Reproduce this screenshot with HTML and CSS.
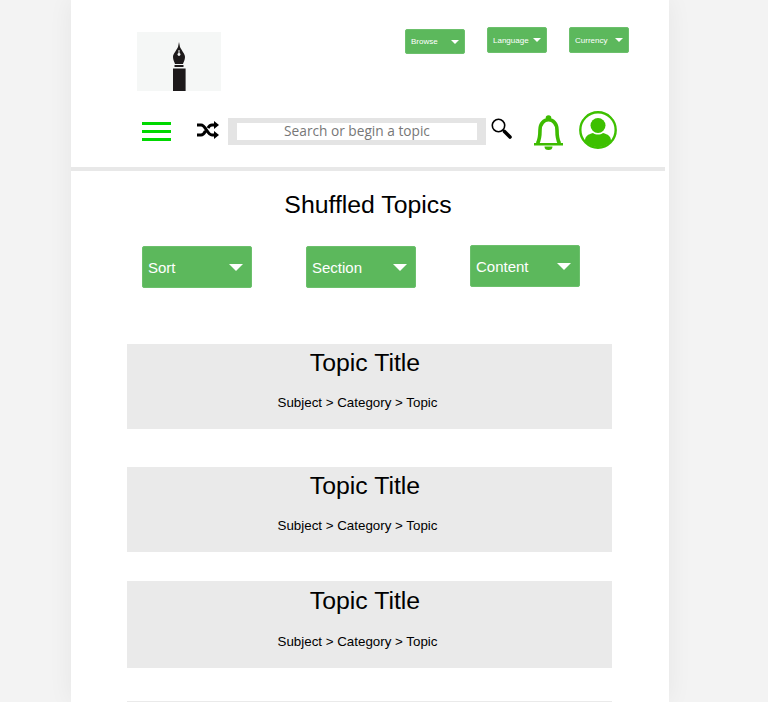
FILE: index.html
```html
<!DOCTYPE html>
<html>
<head>
	<meta charset="utf-8">
	<title>Shuffled Topics</title>
	<link rel="stylesheet" href="styles.css">
</head>
<body>

<div id="page">

	<div id="top">
		<div class="logo">
			<svg width="14" height="49" viewBox="0 0 14 49">
				<path fill="#1d1a1b" d="M7 0 L8 5 C10 9 13 12 13 15 C13 18 11.500 20 11 22 L3 22 C2.500 20 1 18 1 15 C1 12 4 9 6 5 Z"/>
				<path fill="#f5f7f6" d="M6.500 8 h1 v3 a1.500 1.500 0 1 1 -1 0 Z"/>
				<rect x="2.500" y="23" width="9" height="2" fill="#1d1a1b"/>
				<rect x="1" y="26.500" width="12.600" height="22.500" fill="#1d1a1b"/>
			</svg>
		</div>
		<div class="menus">
			<div class="drop small low"><span>Browse</span><i></i></div>
			<div class="drop small"><span>Language</span><i></i></div>
			<div class="drop small"><span>Currency</span><i></i></div>
		</div>
	</div>

	<div id="bar">
		<div class="burger"><b></b><b></b><b></b></div>
		<svg class="shuffle" width="22" height="18" viewBox="0 0 22 18">
			<path fill="none" stroke="#000" stroke-width="3" d="M0 4 H4 C9 4 10 14 15 14 H18 M0 14 H4 C6.500 14 7.500 12 8.500 10 M11 7 C12 5 13 4 15 4 H18"/>
			<path d="M17 0 L22 4 L17 8 Z M17 10 L22 14 L17 18 Z"/>
		</svg>
		<div class="search"><input type="text" placeholder="Search or begin a topic"></div>
		<svg class="glass" width="21" height="21" viewBox="0 0 21 21">
			<circle cx="7.500" cy="7.500" r="6.200" fill="none" stroke="#000" stroke-width="1.600"/>
			<path d="M12 12 L19 19" stroke="#000" stroke-width="1.600"/>
			<path d="M13.500 13.500 L19 19" stroke="#000" stroke-width="3.600" stroke-linecap="round"/>
		</svg>
		<svg class="bell" width="29" height="35" viewBox="0 0 29 35">
			<circle cx="14.500" cy="3" r="2.800" fill="#3dbb00"/>
			<path fill="none" stroke="#3dbb00" stroke-width="3.600" d="M3.500 28.500 C5.500 25 6 22 6 15 C6 8.500 10 4.800 14.500 4.800 C19 4.800 23 8.500 23 15 C23 22 23.500 25 25.500 28.500"/>
			<path fill="#3dbb00" d="M0 28 H29 V30.500 H0 Z M10.500 31.500 H18.500 A4 3.500 0 0 1 10.500 31.500 Z"/>
		</svg>
		<svg class="user" width="38" height="38" viewBox="0 0 38 38">
			<circle cx="19" cy="19" r="17.700" fill="none" stroke="#3dc000" stroke-width="2.400"/>
			<circle cx="19" cy="14.500" r="7.500" fill="#3dc000"/>
			<path fill="#3dc000" d="M6 30 C6 25 9 23.500 14 22 C17 24 21 24 24 22 C29 23.500 32 25 32 30 C28 35 23 36 19 36 C15 36 10 35 6 30 Z"/>
		</svg>
	</div>

	<div class="line"></div>

	<h1>Shuffled Topics</h1>

	<div id="filters">
		<div class="drop big"><span>Sort</span><i></i></div>
		<div class="drop big"><span>Section</span><i></i></div>
		<div class="drop big up"><span>Content</span><i></i></div>
	</div>

	<div id="topics">
		<div class="topic first"><h2>Topic Title</h2><p>Subject &gt; Category &gt; Topic</p></div>
		<div class="topic"><h2>Topic Title</h2><p>Subject &gt; Category &gt; Topic</p></div>
		<div class="topic tall"><h2>Topic Title</h2><p>Subject &gt; Category &gt; Topic</p></div>
		<div class="topic"></div>
	</div>

</div>

</body>
</html>
```

FILE: styles.css
```css
html,body{
	height:100%; overflow:hidden;
}
body{
	margin:0; background:#f3f3f3;
	font-family:"Liberation Sans",Arial,sans-serif; color:#000;
}
h1,h2,p{
	margin:0; font-weight:normal;
}

#page{
	width:598px; height:100%; margin-left:71px; background:#fff;
	box-shadow:0 0 24px rgba(0,0,0,0.06);
	overflow:hidden;
}

/*top*/
#top{
	height:111px;
	display:flex; align-items:flex-start;
}
.logo{
	width:84px; height:59px; margin:32px 0 0 66px; background:#f5f7f6;
	display:flex; justify-content:center; align-items:flex-end;
}
.logo svg{
	display:block; margin-left:-1px;
}
.menus{
	margin:27px 0 0 184px;
	display:flex; gap:22px;
}

/*dropdowns*/
.drop{
	background:#5cb85c; border:1px solid #6cc06c; border-radius:2px; box-sizing:border-box;
	display:flex; align-items:center; justify-content:space-between;
	color:#fff;
}
.drop i{
	width:0; height:0;
	border-style:solid; border-color:#fff transparent transparent; 
}
.small{
	width:60px; height:26px; padding:0 5px 0 5px;
	font-size:8px;
}
.small i{
	border-width:4px 4px 0;
}
.low{
	margin-top:2px; height:25px;
}
.big{
	width:110px; height:42px; padding:0 8px 0 5px;
	font-size:15px;
}
.big i{
	border-width:7px 7px 0;
}
.up{
	margin-top:-1px;
}

/*search bar*/
#bar{
	height:56px;
	display:flex; align-items:flex-start;
}
.burger{
	width:29px; margin:11px 0 0 71px;
}
.burger b{
	display:block; height:3px; margin-bottom:5px; background:#00d800;
}
.shuffle{
	margin:10px 0 0 26px;
}
.search{
	width:258px; height:27px; margin:7px 0 0 9px; background:#e4e4e4;
	display:flex; justify-content:center; align-items:center;
}
.search input{
	width:240px; height:17px; padding:0 0 2px; border:0; background:#fff; box-sizing:border-box;
	font-family:"Open Sans","Noto Sans",sans-serif; font-size:13.700px; text-align:center;
}
.search input::placeholder{
	color:#777; opacity:1;
}
.glass{
	margin:7px 0 0 5px;
}
.bell{
	margin:4px 0 0 22px;
}
.user{
	margin:0 0 0 16px;
}

.line{
	width:594px; height:4px; background:#e8e8e8;
}

h1{
	margin-top:18px; margin-left:-4px;
	font-size:24.800px; line-height:32px; text-align:center;
}

#filters{
	margin:25px 0 0 71px;
	display:flex; gap:54px; align-items:flex-start;
}

/*topics*/
#topics{
	width:485px; margin:56px 0 0 56px;
}
.topic{
	height:85px; margin-bottom:29px; background:#eaeaea;
	text-align:center;
}
.first{
	margin-bottom:38px;
}
.tall{
	height:87px; margin-bottom:33px;
}
.topic h2{
	padding:4px 9px 0 0;
	font-size:24.800px; line-height:30px;
}
.topic p{
	margin:17px 24px 0 0;
	font-size:13.350px; line-height:16px;
}
.tall h2{
	padding-top:5px;
}
.tall p{
	margin-top:18px;
}
```
